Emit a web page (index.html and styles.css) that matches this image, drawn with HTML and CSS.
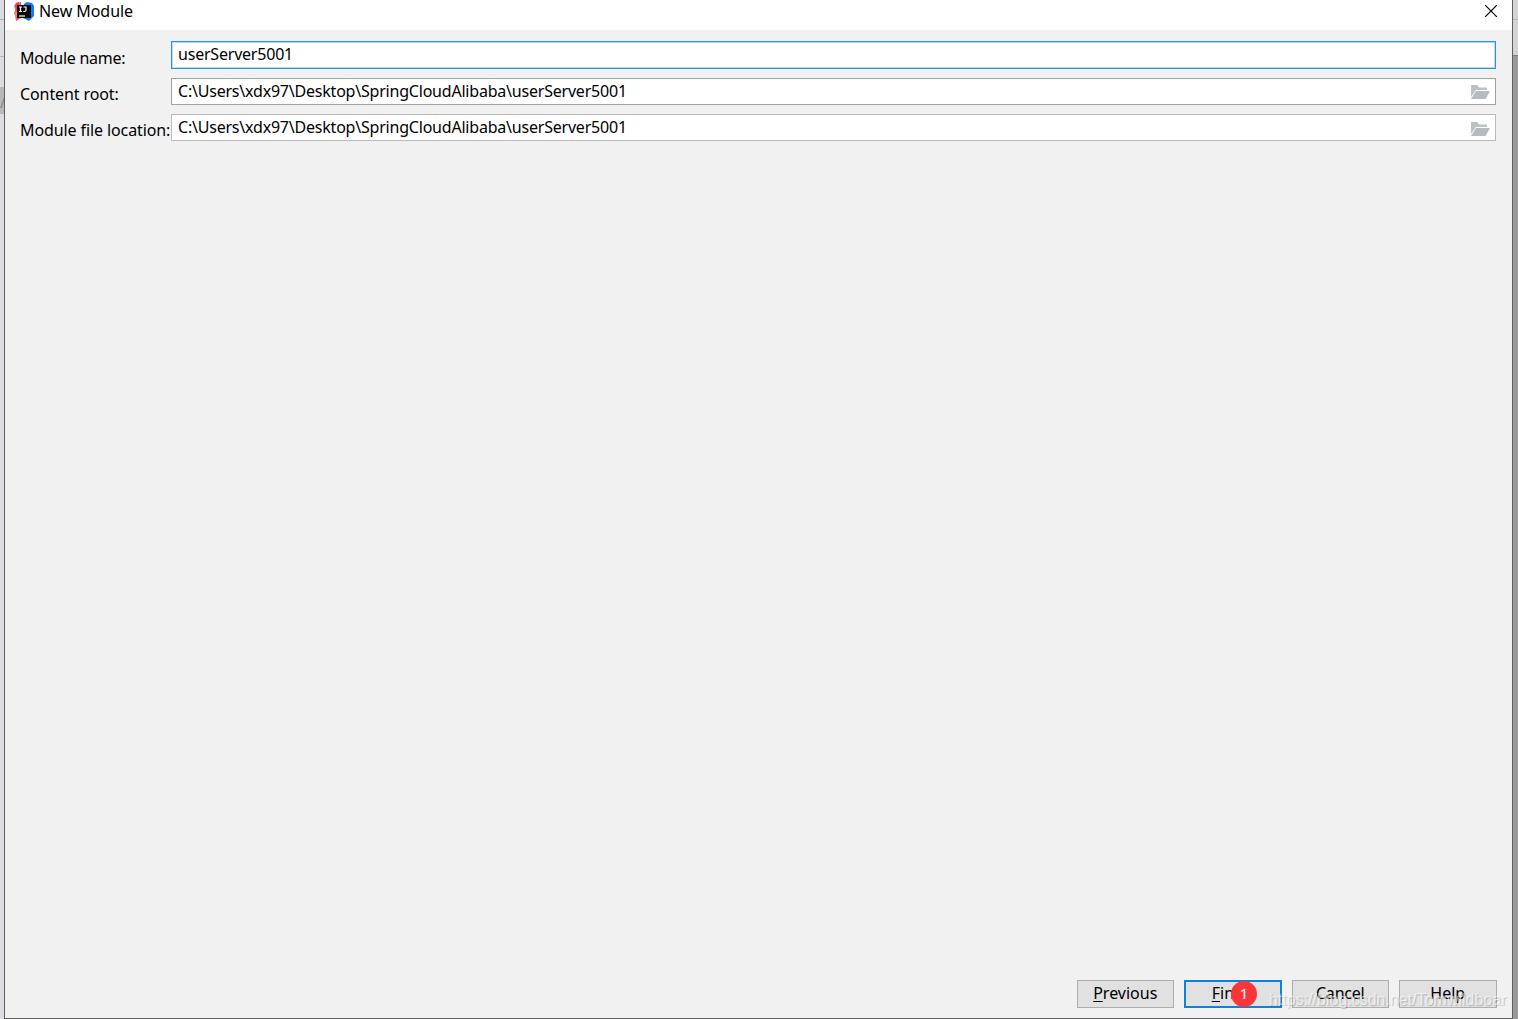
FILE: index.html
```html
<!DOCTYPE html>
<html lang="en">

<head>
    <meta charset="UTF-8">
    <title>New Module</title>
    <link rel="stylesheet" href="styles.css">
</head>

<body>
    <div class="side left">
        <div class="tab"></div>
        <div class="row"></div>
        <div class="gap"></div>
        <div class="mark">/</div>
    </div>
    <div class="dialog">
        <!--title bar-->
        <div class="title">
            <svg class="logo" width="20" height="20" viewBox="0 0 20 20">
                <path d="M2 2L7 1V17L2 20L1 14L0 12L2 9L0 5Z" fill="#f9506a" />
                <path d="M2 2L5 1V9L1 11Z" fill="#f43d5c" />
                <path d="M0 13L3 10V17Z" fill="#f78c48" />
                <path d="M10 3L13 1L18 2L20 5V15L15 20L9 17Z" fill="#087cfa" />
                <rect x="3" y="4" width="14" height="13" fill="#080808" />
                <path d="M5 6H8M6.500 6V10.500M5 10.500H8M9.500 6H12V9Q12 10.500 10.500 10.500H9.300" fill="none" stroke="#fff" stroke-width="1.200" />
                <path d="M5 15H11" stroke="#fff" stroke-width="1.200" />
            </svg>
            <span class="name">New Module</span>
            <svg class="close" width="12" height="12" viewBox="0 0 12 12">
                <path d="M0 0L12 12M12 0L0 12" stroke="#000" stroke-width="1.200" />
            </svg>
        </div>
        <!--form-->
        <div class="form">
            <div class="label l1">Module name:</div>
            <div class="field focus"><span class="path">userServer5001</span></div>
            <div class="label l2">Content root:</div>
            <div class="field">
                <span class="path">C:\Users\xdx97\Desktop\SpringCloudAlibaba\userServer5001</span>
                <svg class="folder" width="19" height="14" viewBox="0 0 19 14">
                    <path d="M0 0H6L8 2.500H16V5H5L0 12Z" fill="#bcc1c5" />
                    <path d="M5 6H19L14.500 14H0Z" fill="#b5bbc0" />
                </svg>
            </div>
            <div class="label l3">Module file location:</div>
            <div class="field light">
                <span class="path">C:\Users\xdx97\Desktop\SpringCloudAlibaba\userServer5001</span>
                <svg class="folder" width="19" height="14" viewBox="0 0 19 14">
                    <path d="M0 0H6L8 2.500H16V5H5L0 12Z" fill="#bcc1c5" />
                    <path d="M5 6H19L14.500 14H0Z" fill="#b5bbc0" />
                </svg>
            </div>
        </div>
        <!--buttons-->
        <div class="buttons">
            <div class="btn"><u>P</u>revious</div>
            <div class="btn default"><u>F</u>inish<span class="badge">1</span></div>
            <div class="btn cancel">Cancel</div>
            <div class="btn">Help</div>
        </div>
    </div>
    <div class="side right">
        <div class="tab"></div>
        <div class="row"></div>
    </div>
    <div class="watermark">https://blog.csdn.net/Tomwildboar</div>
</body>

</html>
```

FILE: styles.css
```css
* {
    margin: 0;
    padding: 0;
    box-sizing: border-box;
}

body {
    display: flex;
    width: 1518px;
    height: 1019px;
    overflow: hidden;
    position: relative;
    background-color: #999;
    font: 16px/20px "Noto Sans", "Open Sans", sans-serif;
    color: #000;
}

.side {
    overflow: hidden;
}

.left {
    width: 4px;
    background-color: #dcdde0;
}

.right {
    width: 5px;
    background-color: #999;
}

.tab {
    height: 20px;
    background-color: #d4d4d4;
    border-bottom: 1px solid #b4b4b4;
}

.row {
    height: 36px;
    background-color: #d4d4d4;
    border-bottom: 1px solid #808080;
}

.left .tab,
.left .row {
    background-color: #dcdde0;
}

.left .row {
    height: 37px;
    border-color: #b4b4b4;
}

.gap {
    height: 30px;
}

.mark {
    height: 27px;
    padding-top: 5px;
    background-color: #b8b8b8;
    color: #888;
}

.dialog {
    display: flex;
    flex-direction: column;
    width: 1509px;
    height: 1019px;
    background-color: #f1f1f1;
    border: 1px solid #5f5f5f;
    border-top: 0;
}

.title {
    display: flex;
    height: 30px;
    padding: 1px 15px 0 9px;
    background-color: #fff;
}

.name {
    margin-left: 5px;
    letter-spacing: -0.07px;
}

.close {
    margin: 4px 0 0 auto;
}

.form {
    display: grid;
    grid-template-columns: 151px 1325px;
    grid-template-rows: 28px 27px 27px;
    row-gap: 9px;
    padding: 11px 0 0 15px;
}

.label {
    padding-top: 6px;
    white-space: nowrap;
    letter-spacing: -0.1px;
}

.l1 {
    padding-top: 7px;
    letter-spacing: -0.25px;
}

.field {
    display: flex;
    align-items: flex-start;
    padding: 2px 5px 0 6px;
    background-color: #fff;
    border: 1px solid #a2a2a2;
}

.path {
    letter-spacing: -0.21px;
}

.light {
    border-color: #bbb;
}

.focus {
    border-color: #2a8fdd;
    box-shadow: inset 0 0 0 1px #b9dcf6;
}

.folder {
    margin: 4px 0 0 auto;
}

.light .folder {
    margin-top: 5px;
}

.buttons {
    display: flex;
    justify-content: flex-end;
    gap: 10px;
    margin-top: auto;
    padding: 0 15.5px 10px 0;
}

.btn {
    position: relative;
    width: 97.5px;
    height: 28px;
    padding-top: 2px;
    text-align: center;
    background-color: #e1e1e1;
    border: 1px solid #adadad;
}

.default {
    padding: 1px 0 0 2px;
    border: 2px solid #0982e3;
}

.cancel {
    letter-spacing: -0.2px;
}

u {
    text-underline-offset: 2px;
}

.badge {
    position: absolute;
    left: 45px;
    top: -1px;
    width: 26px;
    height: 26px;
    line-height: 25px;
    font-size: 15px;
    border-radius: 50%;
    background-color: #fb3639;
    color: #fff;
}

.watermark {
    position: absolute;
    left: 1269px;
    top: 990px;
    font: 16px/20px "Liberation Sans", Arial, sans-serif;
    white-space: nowrap;
    color: rgba(255, 255, 255, 0.6);
    text-shadow: 1px 1px 1px rgba(0, 0, 0, 0.2);
}
```
